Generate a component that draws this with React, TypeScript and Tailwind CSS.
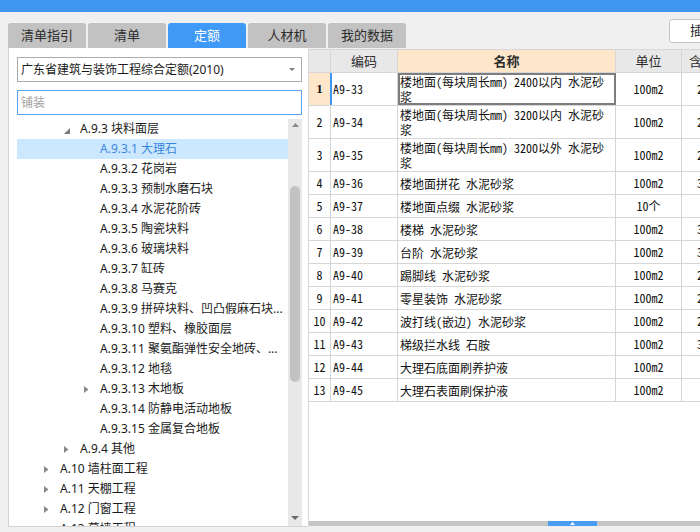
import React from "react";

type TreeNode = {
  level: 1 | 2 | 3;
  text: string;
  arrow?: "open" | "closed";
  selected?: boolean;
};

const tree: TreeNode[] = [
  { level: 2, text: "A.9.3 块料面层", arrow: "open" },
  { level: 3, text: "A.9.3.1 大理石", selected: true },
  { level: 3, text: "A.9.3.2 花岗岩" },
  { level: 3, text: "A.9.3.3 预制水磨石块" },
  { level: 3, text: "A.9.3.4 水泥花阶砖" },
  { level: 3, text: "A.9.3.5 陶瓷块料" },
  { level: 3, text: "A.9.3.6 玻璃块料" },
  { level: 3, text: "A.9.3.7 缸砖" },
  { level: 3, text: "A.9.3.8 马赛克" },
  { level: 3, text: "A.9.3.9 拼碎块料、凹凸假麻石块..." },
  { level: 3, text: "A.9.3.10 塑料、橡胶面层" },
  { level: 3, text: "A.9.3.11 聚氨酯弹性安全地砖、..." },
  { level: 3, text: "A.9.3.12 地毯" },
  { level: 3, text: "A.9.3.13 木地板", arrow: "closed" },
  { level: 3, text: "A.9.3.14 防静电活动地板" },
  { level: 3, text: "A.9.3.15 金属复合地板" },
  { level: 2, text: "A.9.4 其他", arrow: "closed" },
  { level: 1, text: "A.10 墙柱面工程", arrow: "closed" },
  { level: 1, text: "A.11 天棚工程", arrow: "closed" },
  { level: 1, text: "A.12 门窗工程", arrow: "closed" },
  { level: 1, text: "A.13 幕墙工程", arrow: "closed" },
];

const indent = { 1: "pl-[27px]", 2: "pl-[47px]", 3: "pl-[67px]" };

type Row = { n: string; code: string; name: string[]; unit: string; q: string };

const rows: Row[] = [
  { n: "1", code: "A9-33", name: ["楼地面(每块周长mm) 2400以内 水泥砂", "浆"], unit: "100m2", q: "2" },
  { n: "2", code: "A9-34", name: ["楼地面(每块周长mm) 3200以内 水泥砂", "浆"], unit: "100m2", q: "2" },
  { n: "3", code: "A9-35", name: ["楼地面(每块周长mm) 3200以外 水泥砂", "浆"], unit: "100m2", q: "2" },
  { n: "4", code: "A9-36", name: ["楼地面拼花 水泥砂浆"], unit: "100m2", q: "3" },
  { n: "5", code: "A9-37", name: ["楼地面点缀 水泥砂浆"], unit: "10个", q: "" },
  { n: "6", code: "A9-38", name: ["楼梯 水泥砂浆"], unit: "100m2", q: "3" },
  { n: "7", code: "A9-39", name: ["台阶 水泥砂浆"], unit: "100m2", q: "3" },
  { n: "8", code: "A9-40", name: ["踢脚线 水泥砂浆"], unit: "100m2", q: "2" },
  { n: "9", code: "A9-41", name: ["零星装饰 水泥砂浆"], unit: "100m2", q: "2" },
  { n: "10", code: "A9-42", name: ["波打线(嵌边) 水泥砂浆"], unit: "100m2", q: "2" },
  { n: "11", code: "A9-43", name: ["梯级拦水线 石胺"], unit: "100m2", q: "3" },
  { n: "12", code: "A9-44", name: ["大理石底面刷养护液"], unit: "100m2", q: "" },
  { n: "13", code: "A9-45", name: ["大理石表面刷保护液"], unit: "100m2", q: "" },
];

const tabs = ["清单指引", "清单", "定额", "人材机", "我的数据"];

function Arrow({ kind }: { kind?: "open" | "closed" }) {
  if (kind === "open")
    return (
      <svg width="6" height="6" viewBox="0 0 6 6" className="mt-[3px]">
        <path d="M6 0V6H0Z" fill="#7c7c7c" />
      </svg>
    );
  if (kind === "closed")
    return (
      <svg width="5" height="7" viewBox="0 0 5 7" className="mt-[1px]">
        <path d="M0 0L4.5 3.5L0 7Z" fill="#8a8a8a" />
      </svg>
    );
  return null;
}

function Tree() {
  return (
    <div className="flex-1 flex min-h-0 mt-[4px]">
      <div className="flex-1 overflow-hidden">
        {tree.map((t) => (
          <div
            key={t.text}
            className={`h-[20px] flex items-center text-[12px] leading-[20px] whitespace-nowrap ${indent[t.level]} ${
              t.selected ? "bg-[#cce8ff] text-[#3a86de]" : "text-[#1b1b1b]"
            }`}
          >
            <div className="w-[16px] h-[20px] flex items-center shrink-0">
              <Arrow kind={t.arrow} />
            </div>
            <span>{t.text}</span>
          </div>
        ))}
      </div>
      {/* vertical scrollbar */}
      <div className="w-[14px] bg-[#e8e8e8] flex flex-col items-center">
        <div className="h-[12px] flex items-center justify-center">
          <svg width="7" height="4" viewBox="0 0 7 4">
            <path d="M0 4L3.5 0L7 4Z" fill="#8a8a8a" />
          </svg>
        </div>
        <div className="h-[55px]" />
        <div className="w-[10px] h-[196px] rounded-full bg-[#c2c2c2]" />
        <div className="flex-1" />
        <div className="h-[12px] flex items-start justify-center pt-[2px]">
          <svg width="8" height="4" viewBox="0 0 8 4">
            <path d="M0 0H8L4 4Z" fill="#6a6a6a" />
          </svg>
        </div>
      </div>
    </div>
  );
}

const cols = "grid grid-cols-[22px_67px_218px_66px_80px]";
const line = "border-[#d6d6d6]";

function Table() {
  return (
    <div className="flex-1 min-h-0 bg-white overflow-hidden [font-family:'Noto_Sans_CJK_SC',sans-serif] [font-feature-settings:'hwid'] text-[12px] text-[#111]">
      <div className={`${cols} h-[24px] border-t border-b ${line} text-[13px] text-[#2c2c2c]`}>
        <div className={`bg-[#e8e8e8] border-r ${line}`} />
        <div className={`bg-[#e8e8e8] border-r ${line} flex items-center justify-center`}>编码</div>
        <div className={`bg-[#fde6c9] border-r ${line} flex items-center justify-center font-bold`}>名称</div>
        <div className={`bg-[#e8e8e8] border-r ${line} flex items-center justify-center`}>单位</div>
        <div className="bg-[#e8e8e8] flex items-center pl-[7px]">含量</div>
      </div>
      {rows.map((r, i) => {
        const first = i === 0;
        const tall = r.name.length > 1;
        return (
          <div key={r.n} className={`${cols} border-b ${line} ${tall ? "h-[33px]" : "h-[23px]"}`}>
            <div
              className={`border-r flex items-center justify-center ${
                first
                  ? "bg-[#fde6c9] border-[#3d95f5] [font-family:'Liberation_Serif',serif] font-bold text-[13px]"
                  : line
              }`}
            >
              {r.n}
            </div>
            <div
              className={`border-r ${line} flex items-center pl-[2px] ${
                first ? "shadow-[inset_1px_0_0_#3d95f5]" : ""
              }`}
            >
              {r.code}
            </div>
            <div
              className={`border-r ${line} pl-[2px] leading-[15px] flex flex-col ${
                tall ? "justify-start pt-[1px]" : "justify-center"
              } ${first ? "relative z-10 outline-2 outline-[#7d7d7d] -outline-offset-2" : ""}`}
            >
              {r.name.map((l) => (
                <div key={l} className="whitespace-nowrap">
                  {l}
                </div>
              ))}
            </div>
            <div className={`border-r ${line} flex items-center justify-center`}>{r.unit}</div>
            <div className="flex items-center pl-[15px]">{r.q}</div>
          </div>
        );
      })}
    </div>
  );
}

export default function App() {
  return (
    <div className="w-[700px] h-[532px] overflow-hidden bg-[#f0f0f0] flex flex-col [font-family:'Noto_Sans','Noto_Sans_CJK_SC',sans-serif]">
      {/* title bar, mostly scrolled off */}
      <div className="h-[12px] bg-[#4096ef] overflow-hidden pl-[11px]">
        <div className="-mt-[17px] text-[14px] leading-[20px] text-white underline">查询</div>
      </div>

      <div className="flex-1 flex min-h-0">
        {/* left column */}
        <div className="w-[308px] pl-[8px] pt-[11px] flex flex-col">
          <div className="flex gap-[2px] h-[25px]">
            {tabs.map((t) => (
              <div
                key={t}
                className={`w-[78px] shrink-0 rounded-t-[3px] flex items-center justify-center text-[13px] ${
                  t === "定额" ? "bg-[#3f99f6] text-white" : "bg-[#c2c2c2] text-[#2d2d2d]"
                }`}
              >
                {t}
              </div>
            ))}
          </div>
          <div className="h-[479px] bg-white border-l border-b border-[#d2d2d2] pl-[8px] pr-[6px] pt-[9px] flex flex-col">
            <div className="h-[25px] border border-[#acacac] flex items-center pl-[3px] pr-[6px] text-[12px] text-[#1a1a1a]">
              <span>广东省建筑与装饰工程综合定额(2010)</span>
              <svg width="6" height="3" viewBox="0 0 6 3" className="ml-auto">
                <path d="M0 0H6L3 3Z" fill="#7d7d7d" />
              </svg>
            </div>
            <div className="h-[25px] mt-[8px] border border-[#5aa3ef] flex items-center pl-[3px] text-[12px] text-[#a3a3a3]">
              铺装
            </div>
            <Tree />
          </div>
        </div>

        {/* right column */}
        <div className="flex-1 flex flex-col min-w-0">
          <div className="h-[37px] pl-[361px] pt-[7px] shrink-0">
            <div className="w-[60px] h-[24px] bg-white border border-[#c6c6c6] rounded-[3px] flex items-center pl-[20px] text-[13px] text-[#222]">
              插入
            </div>
          </div>
          <div className={`h-[477px] border-l ${line} flex flex-col`}>
            <Table />
            <div className="h-[5px] bg-[#c6c6c6] flex shrink-0">
              <div className="ml-[239px] w-[49px] bg-[#4a9cf2] flex items-center justify-center">
                <svg width="5" height="3" viewBox="0 0 5 3">
                  <path d="M0 3L2.5 0L5 3Z" fill="#ffffff" />
                </svg>
              </div>
            </div>
          </div>
        </div>
      </div>
    </div>
  );
}
